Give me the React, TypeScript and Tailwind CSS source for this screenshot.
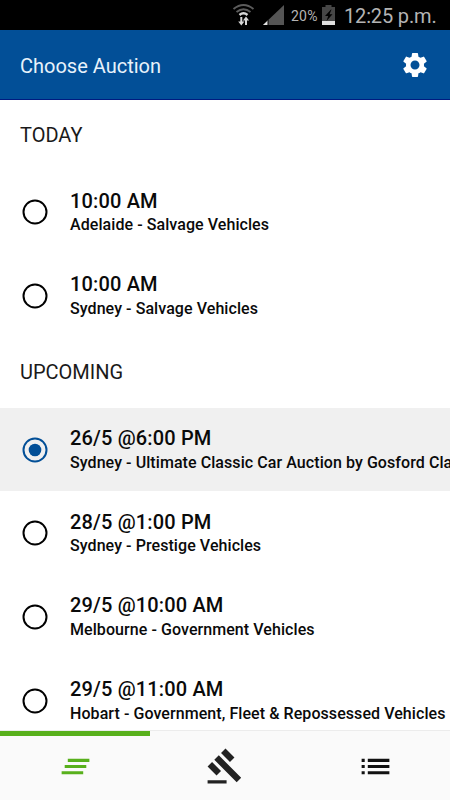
import { useState } from 'react';
import { MdClearAll, MdGavel, MdList, MdSettings } from 'react-icons/md';

interface Auction {
  id: number;
  time: string;
  title: string;
}

const today: Auction[] = [
  { id: 1, time: '10:00 AM', title: 'Adelaide - Salvage Vehicles' },
  { id: 2, time: '10:00 AM', title: 'Sydney - Salvage Vehicles' },
];

const upcoming: Auction[] = [
  { id: 3, time: '26/5 @6:00 PM', title: 'Sydney - Ultimate Classic Car Auction by Gosford Classics' },
  { id: 4, time: '28/5 @1:00 PM', title: 'Sydney - Prestige Vehicles' },
  { id: 5, time: '29/5 @10:00 AM', title: 'Melbourne - Government Vehicles' },
  { id: 6, time: '29/5 @11:00 AM', title: 'Hobart - Government, Fleet & Repossessed Vehicles' },
];

function StatusBar() {
  return (
    <div className="flex h-[30px] shrink-0 items-center bg-black pl-[232px] text-[#b4b4b4]">
      {/* Wifi */}
      <svg className="h-[30px] w-[24px] shrink-0" viewBox="0 0 24 30" fill="none">
        <path d="M1.500 9Q11.500 1 21.500 9M4.500 12Q11.500 6.500 18.500 12" stroke="#5c5c5c" strokeWidth="2" />
        <path d="M7.500 15Q11.500 11.500 15.500 15" stroke="#d8d8d8" strokeWidth="2.400" />
        <path d="M9.300 17v5M14 25v-5" stroke="#d8d8d8" strokeWidth="2" />
        <path d="M6.200 21.500h6.200L9.300 25.500zM10.900 20.500h6.200L14 16.500z" fill="#d8d8d8" />
      </svg>
      {/* Signal */}
      <svg className="ml-[7px] h-[30px] w-[21px] shrink-0" viewBox="0 0 21 30">
        <path d="M21 5v20H0z" fill="#555" />
        <path d="M5 20.300V25H0z" fill="#e4e4e4" />
        <path d="M5 20v5" stroke="#000" strokeWidth="1" />
      </svg>
      <span className="ml-[7px] mt-[2px] w-[31px] whitespace-nowrap text-[14px] tracking-[0.2px]">20%</span>
      {/* Battery */}
      <svg className="h-[30px] w-[13px] shrink-0" viewBox="0 0 13 30">
        <path d="M0 7h3.500V5h6v2H13v18H0z" fill="#464646" />
        <path d="M0 21h13v4H0z" fill="#e0e0e0" />
        <path d="M9 9.500L3 16h3.200L4.500 21l6-6.800H7.500L9.500 9.500z" fill="#000" />
      </svg>
      <span className="ml-[9px] mt-[2px] whitespace-nowrap text-[20px] tracking-[-0.15px]">12:25 p.m.</span>
    </div>
  );
}

function Radio({ checked }: { checked: boolean }) {
  return (
    <svg className="h-[26px] w-[26px] shrink-0" viewBox="0 0 26 26">
      <circle cx="13" cy="13" r="11.500" fill="none" stroke={checked ? '#024f97' : '#000'} strokeWidth="2" />
      {checked && <circle cx="13" cy="13" r="6.300" fill="#024f97" />}
    </svg>
  );
}

export default function App() {
  const [selected, setSelected] = useState(3);

  const renderAuction = (auction: Auction) => (
    <button
      key={auction.id}
      onClick={() => setSelected(auction.id)}
      className={`flex h-[83.7px] w-full items-center pt-[0.8px] pl-[22px] text-left ${
        auction.id === selected ? 'bg-[#f0f0f0]' : ''
      }`}
    >
      <Radio checked={auction.id === selected} />
      <div className="ml-[22px] whitespace-nowrap font-medium text-[#0a0a0a]">
        <div className="text-[20px] leading-[24px] tracking-[0.16px]">{auction.time}</div>
        <div className="mt-[0.4px] text-[16px] leading-[23px] tracking-[0.07px]">{auction.title}</div>
      </div>
    </button>
  );

  return (
    <div className="flex h-[800px] w-[450px] flex-col overflow-hidden bg-white font-['Roboto',sans-serif]">
      <StatusBar />

      <header className="flex h-[70px] shrink-0 items-center justify-between border-b border-[#001b80] bg-[#024f97] pt-px pr-[20px] pl-5 text-[#e8f2fb]">
        <h1 className="pt-px text-[20px]">Choose Auction</h1>
        <MdSettings className="text-[30px] text-white" />
      </header>

      <main className="min-h-0 flex-1 overflow-hidden">
        <h2 className="flex h-[70px] items-center pl-5 text-[20px] text-[#1a1a1a]">TODAY</h2>
        {today.map(renderAuction)}
        <h2 className="flex h-[70.2px] items-center pb-[0.4px] pl-5 text-[20px] text-[#1a1a1a]">UPCOMING</h2>
        {upcoming.map(renderAuction)}
      </main>

      {/* Tabs */}
      <nav className="grid h-[70px] shrink-0 grid-cols-3 border-t border-[#ececec] bg-[#fafafa] text-[#111]">
        <button className="flex items-center justify-center border-t-[5px] border-[#58b01c] pb-[4px] text-[#58b01c]">
          <MdClearAll className="text-[37px]" />
        </button>
        <button className="flex items-center justify-center">
          <MdGavel className="text-[38px] text-[#222]" />
        </button>
        <button className="flex items-center justify-center pt-px">
          <MdList className="text-[37px]" />
        </button>
      </nav>
    </div>
  );
}
